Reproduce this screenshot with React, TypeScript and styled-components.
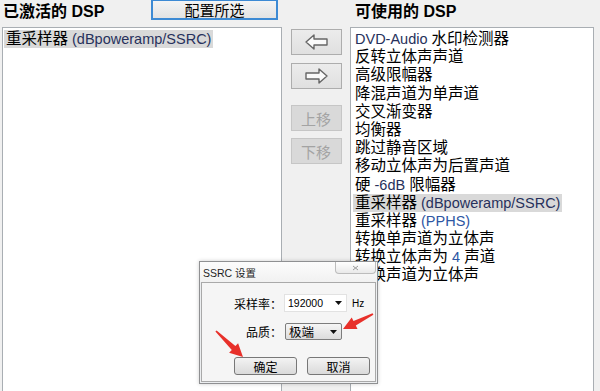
import React from "react";
import styled, { createGlobalStyle } from "styled-components";

const GlobalStyle = createGlobalStyle`
  html, body {
    margin: 0;
    padding: 0;
    background: #f0f0f0;
    overflow: hidden;
  }
  body {
    font-family: "Liberation Sans", "Noto Sans CJK SC", sans-serif;
    color: #000;
  }
`;

const Window = styled.div`
  position: relative;
  width: 600px;
  height: 391px;
  overflow: hidden;
  display: grid;
  grid-template-columns: 282px 68px 1fr;
  grid-template-rows: 27px 1fr;
  background: #f0f0f0;
`;

const HeaderLeft = styled.div`
  display: flex;
  align-items: flex-start;
  justify-content: space-between;
  padding: 0 4px 0 3px;
`;

const HeaderRight = styled.div`
  grid-column: 3;
  padding-left: 5px;
`;

const Title = styled.div`
  font-size: 16px;
  font-weight: bold;
  line-height: 24px;
  white-space: nowrap;
`;

const ConfigButton = styled.div`
  width: 127px;
  height: 21px;
  box-sizing: border-box;
  margin-top: -1px;
  border: 2px solid #3d8ad4;
  background: linear-gradient(#f4f4f4, #e3e3e3);
  display: flex;
  align-items: center;
  justify-content: center;
  font-size: 15px;
`;

const ListBox = styled.div<{ $left: number; $right: number }>`
  background: #fff;
  border: 1px solid #a9aeb3;
  border-bottom: none;
  margin-left: ${(p) => p.$left}px;
  margin-right: ${(p) => p.$right}px;
  padding: 2px 0 0 ${(p) => (p.$left ? 1 : 2)}px;
  overflow: hidden;
`;

const Item = styled.div<{ $selected?: boolean }>`
  width: fit-content;
  height: 18.2px;
  line-height: 18.2px;
  padding: 0 2px;
  font-size: 15.5px;
  white-space: nowrap;
  background: ${(p) => (p.$selected ? "#d9d9d9" : "transparent")};
`;

const Latin = styled.span<{ $blue?: boolean }>`
  font-size: 14.5px;
  color: ${(p) => (p.$blue ? "#2d56a3" : "#27315c")};
`;

const MiddleColumn = styled.div`
  display: flex;
  flex-direction: column;
  align-items: center;
`;

const MoveButton = styled.div<{ $top: number; $disabled?: boolean }>`
  width: 51px;
  height: 26px;
  margin-top: ${(p) => p.$top}px;
  box-sizing: border-box;
  border: 1px solid ${(p) => (p.$disabled ? "#c6c6c6" : "#adadad")};
  background: ${(p) => (p.$disabled ? "#d9d9d9" : "linear-gradient(#ececec, #e0e0e0)")};
  color: ${(p) => (p.$disabled ? "#a3a3a3" : "#000")};
  display: flex;
  align-items: center;
  justify-content: center;
  font-size: 15px;
`;

const Dialog = styled.div`
  position: absolute;
  left: 199px;
  top: 261px;
  width: 179px;
  height: 123px;
  box-sizing: border-box;
  border: 1px solid #8f9092;
  background: #eceef0;
  display: flex;
  flex-direction: column;
  box-shadow: 0 0 4px rgba(0, 0, 0, 0.2);
`;

const TitleBar = styled.div`
  position: relative;
  height: 20px;
  display: flex;
  align-items: center;
  padding-left: 3px;
  font-size: 10.5px;
  color: #1e1e1e;
  background: linear-gradient(#fcfcfc, #f1f1f1);
`;

const CloseBox = styled.div`
  position: absolute;
  right: 1px;
  top: 0;
  width: 39px;
  height: 11px;
  border: 1px solid #bcbcbc;
  border-top: none;
  border-radius: 0 0 4px 4px;
  background: linear-gradient(#ffffff, #e9e9e9);
  display: flex;
  align-items: center;
  justify-content: center;
`;

const Panel = styled.div`
  flex: 1;
  margin: 0 1px 1px;
  border: 1px solid #a9a9a9;
  background: #f5f5f5;
  padding-top: 11px;
  display: flex;
  flex-direction: column;
`;

const FieldRow = styled.div<{ $top?: number }>`
  display: flex;
  align-items: center;
  margin-top: ${(p) => p.$top ?? 0}px;
`;

const Label = styled.div`
  width: 80px;
  text-align: right;
  font-size: 12px;
  white-space: nowrap;
`;

const Select = styled.div<{ $width: number; $boxed?: boolean }>`
  width: ${(p) => p.$width}px;
  height: ${(p) => (p.$boxed ? 17 : 18)}px;
  margin-left: ${(p) => (p.$boxed ? 3 : 2)}px;
  box-sizing: border-box;
  border: 1px solid ${(p) => (p.$boxed ? "#7d7d7d" : "#e2e2e2")};
  border-radius: ${(p) => (p.$boxed ? 2 : 0)}px;
  background: ${(p) => (p.$boxed ? "linear-gradient(#f6f6f6, #dcdcdc)" : "#fff")};
  display: flex;
  align-items: center;
  justify-content: space-between;
  padding: 0 4px 0 3px;
  font-size: ${(p) => (p.$boxed ? 12.5 : 10.5)}px;
`;

const Unit = styled.span`
  margin-left: 5px;
  font-size: 10px;
`;

const ButtonRow = styled.div`
  display: flex;
  gap: 10px;
  padding-left: 32px;
  margin-top: 17px;
`;

const DialogButton = styled.div`
  width: 63px;
  height: 18px;
  box-sizing: border-box;
  border: 1px solid #777;
  border-radius: 3px;
  background: linear-gradient(#f3f3f3, #dadada);
  display: flex;
  align-items: center;
  justify-content: center;
  font-size: 12px;
`;

const Overlay = styled.svg`
  position: absolute;
  left: 0;
  top: 0;
  pointer-events: none;
`;

const activeItems = ["重采样器 (dBpoweramp/SSRC)"];

const availableItems = [
  "DVD-Audio 水印检测器",
  "反转立体声声道",
  "高级限幅器",
  "降混声道为单声道",
  "交叉渐变器",
  "均衡器",
  "跳过静音区域",
  "移动立体声为后置声道",
  "硬 -6dB 限幅器",
  "重采样器 (dBpoweramp/SSRC)",
  "重采样器 (PPHS)",
  "转换单声道为立体声",
  "转换立体声为 4 声道",
  "转换声道为立体声",
];

// ascii runs are drawn in the smaller latin face, like the original UI font
const renderLabel = (text: string) =>
  text.split(/([\x20-\x7e]+)/).map((part, i) =>
    /[\x21-\x7e]/.test(part) ? (
      <Latin key={i} $blue={part.includes("PPHS") || part.includes("4")}>
        {part}
      </Latin>
    ) : (
      part
    )
  );

const arrowPoints = (tx: number, ty: number, hx: number, hy: number) => {
  const len = Math.hypot(hx - tx, hy - ty);
  const ux = (hx - tx) / len;
  const uy = (hy - ty) / len;
  const px = -uy;
  const py = ux;
  const headLen = 13;
  const bx = hx - ux * headLen;
  const by = hy - uy * headLen;
  const pt = (x: number, y: number, w: number, s: number) =>
    `${(x + px * w * s).toFixed(1)},${(y + py * w * s).toFixed(1)}`;
  return [
    pt(tx, ty, 0.8, 1),
    pt(bx, by, 2.6, 1),
    pt(bx, by, 6.5, 1),
    `${hx},${hy}`,
    pt(bx, by, 6.5, -1),
    pt(bx, by, 2.6, -1),
    pt(tx, ty, 0.8, -1),
  ].join(" ");
};

const ArrowIcon = ({ dir }: { dir: "left" | "right" }) => (
  <svg width="23" height="16" viewBox="0 0 23 16">
    <polygon
      points={
        dir === "left"
          ? "1,8 9,1 9,5 22,5 22,11 9,11 9,15"
          : "22,8 14,1 14,5 1,5 1,11 14,11 14,15"
      }
      fill="#fafafa"
      stroke="#666"
      strokeWidth="1.4"
      strokeLinejoin="round"
    />
  </svg>
);

const DropArrow = () => (
  <svg width="7" height="4" viewBox="0 0 7 4">
    <polygon points="0,0 7,0 3.5,4" fill="#111" />
  </svg>
);

const App = () => {
  return (
    <>
      <GlobalStyle />
      <Window>
        <HeaderLeft>
          <Title>已激活的 DSP</Title>
          <ConfigButton>配置所选</ConfigButton>
        </HeaderLeft>
        <HeaderRight>
          <Title>可使用的 DSP</Title>
        </HeaderRight>

        <ListBox $left={2} $right={0}>
          {activeItems.map((item) => (
            <Item key={item} $selected>
              {renderLabel(item)}
            </Item>
          ))}
        </ListBox>

        <MiddleColumn>
          <MoveButton $top={2}>
            <ArrowIcon dir="left" />
          </MoveButton>
          <MoveButton $top={8}>
            <ArrowIcon dir="right" />
          </MoveButton>
          <MoveButton $top={16} $disabled>
            上移
          </MoveButton>
          <MoveButton $top={7} $disabled>
            下移
          </MoveButton>
        </MiddleColumn>

        <ListBox $left={0} $right={6}>
          {availableItems.map((item, i) => (
            <Item key={item + i} $selected={i === 9}>
              {renderLabel(item)}
            </Item>
          ))}
        </ListBox>

        <Dialog>
          <TitleBar>
            SSRC 设置
            <CloseBox>
              <svg width="7" height="6" viewBox="0 0 7 6">
                <path d="M1 1 L6 5 M6 1 L1 5" stroke="#9a9a9a" strokeWidth="1" />
              </svg>
            </CloseBox>
          </TitleBar>
          <Panel>
            <FieldRow>
              <Label>采样率：</Label>
              <Select $width={63}>
                192000
                <DropArrow />
              </Select>
              <Unit>Hz</Unit>
            </FieldRow>
            <FieldRow $top={11}>
              <Label>品质：</Label>
              <Select $width={57} $boxed>
                极端
                <DropArrow />
              </Select>
            </FieldRow>
            <ButtonRow>
              <DialogButton>确定</DialogButton>
              <DialogButton>取消</DialogButton>
            </ButtonRow>
          </Panel>
        </Dialog>

        <Overlay width="600" height="391" viewBox="0 0 600 391">
          <polygon points={arrowPoints(373, 314, 343, 329)} fill="#e8302a" />
          <polygon points={arrowPoints(216, 331, 243, 357)} fill="#e8302a" />
        </Overlay>
      </Window>
    </>
  );
};

export default App;
